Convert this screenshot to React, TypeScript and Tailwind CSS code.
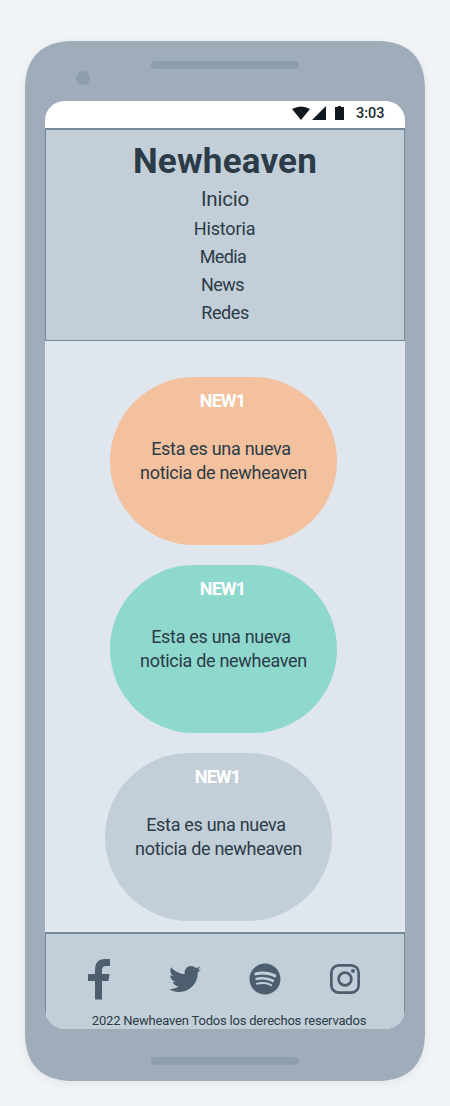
import { FaTwitter, FaSpotify } from "react-icons/fa";

const menu = [
  { label: "Inicio", style: "h-[32px] leading-[32px] text-[20.5px] tracking-[-0.2px]" },
  { label: "Historia", style: "h-[28px] leading-[28px] text-[18px] tracking-[-0.15px] pr-px" },
  { label: "Media", style: "h-[28px] leading-[28px] text-[18px] tracking-[-0.6px] pr-[4px]" },
  { label: "News", style: "h-[28px] leading-[28px] text-[18px] tracking-[-0.5px] pr-[5px]" },
  { label: "Redes", style: "h-[28px] leading-[28px] text-[18px] tracking-[-0.4px]" },
];

const cards = ["ml-[65px] bg-[#f3c19d]", "ml-[65px] bg-[#8fd8cd]", "ml-[60px] bg-[#c3cfd8]"];

function StatusBar() {
  return (
    <div className="flex h-[27px] items-center bg-white pl-[247px] text-[#101820]">
      <svg width="53" height="16" viewBox="0 0 53 16" className="-mt-[3px]" fill="currentColor">
        <path d="M0 4Q9 -1 18 4L9 15Z" />
        <path d="M20 15H34V1Z" />
        <path d="M43 2H46V1H49V2H52V15H43Z" />
      </svg>
      <span className="-mt-[2px] ml-[11px] text-[14.5px] font-medium text-[#222c36]">3:03</span>
    </div>
  );
}

function NewsCard({ style }: { style: string }) {
  return (
    <article className={`h-[168px] w-[227px] rounded-[84px] pr-[5px] pt-[12px] text-center text-[18px] leading-6 ${style}`}>
      <h2 className="pl-[3px] text-[18px] font-bold tracking-[-0.9px] text-white">NEW1</h2>
      <p className="mt-6 whitespace-nowrap tracking-[-0.3px] text-[#2b3b47]">
        <span className="block">Esta es una nueva</span>
        <span className="block pl-[5px]">noticia de newheaven</span>
      </p>
    </article>
  );
}

export default function App() {
  return (
    <div className="h-[1106px] w-[450px] bg-[#f0f4f7] px-[25px] pt-[41px] font-['Roboto',sans-serif] text-[#2b3b47]">
      <div className="flex h-[1040px] flex-col rounded-[50px] bg-[#9eadb9] px-5 shadow-[0_2px_10px_rgba(0,0,0,0.07)] [corner-shape:superellipse(1.3)]">
        <div className="flex h-[60px] shrink-0 items-start">
          <div className="ml-[31px] mt-[30px] size-[14px] rounded-full bg-[#8f9eac]" />
          <div className="ml-[61px] mt-5 h-2 w-[148px] rounded-full bg-[#8f9eac]" />
        </div>
        <div className="flex h-[928px] shrink-0 flex-col overflow-hidden rounded-[20px] bg-[#dfe6ee]">
          <StatusBar />
          <header className="h-[213px] shrink-0 border border-t-2 border-[#768998] bg-[#c3cfd8] pt-[11px] text-center">
            <h1 className="h-[42px] text-[35px] font-bold leading-[42px] tracking-[0.2px]">Newheaven</h1>
            <nav>
              {menu.map((item) => (
                <div key={item.label} className={item.style}>{item.label}</div>
              ))}
            </nav>
          </header>
          <main className="flex h-[591px] shrink-0 flex-col gap-5 pt-9">
            {cards.map((style, i) => (
              <NewsCard key={i} style={style} />
            ))}
          </main>
          <footer className="h-[97px] shrink-0 border border-b-0 border-t-2 border-[#768998] bg-[#c3cfd8]">
            <div className="flex h-[78px] pl-[42px] pt-[25px] text-[#4d5f6e]">
              <svg width="22" height="41" viewBox="0 0 22 41" fill="currentColor">
                <path d="M7 40.5V22H0V15H7V11Q7 0 17 0H22V7H18Q14 7 14 11V15H21.5L20.5 22H14V40.5Z" />
              </svg>
              <FaTwitter className="ml-[59px] mt-[4px] size-8" />
              <FaSpotify className="ml-12 mt-[4px] size-8" />
              <svg width="30" height="30" viewBox="0 0 30 30" className="ml-[49px] mt-[5px]" fill="none" stroke="currentColor" strokeWidth="2.7">
                <rect x="1.35" y="1.35" width="27.3" height="27.3" rx="7.5" />
                <circle cx="15" cy="15" r="6.4" />
                <circle cx="23" cy="7" r="2" fill="currentColor" stroke="none" />
              </svg>
            </div>
            <p className="whitespace-nowrap pl-2 text-center text-[13px] leading-[18px] tracking-[-0.2px]">2022 Newheaven Todos los derechos reservados</p>
          </footer>
        </div>
        <div className="mx-auto mt-[28px] h-2 w-[148px] rounded-full bg-[#8f9eac]" />
      </div>
    </div>
  );
}
